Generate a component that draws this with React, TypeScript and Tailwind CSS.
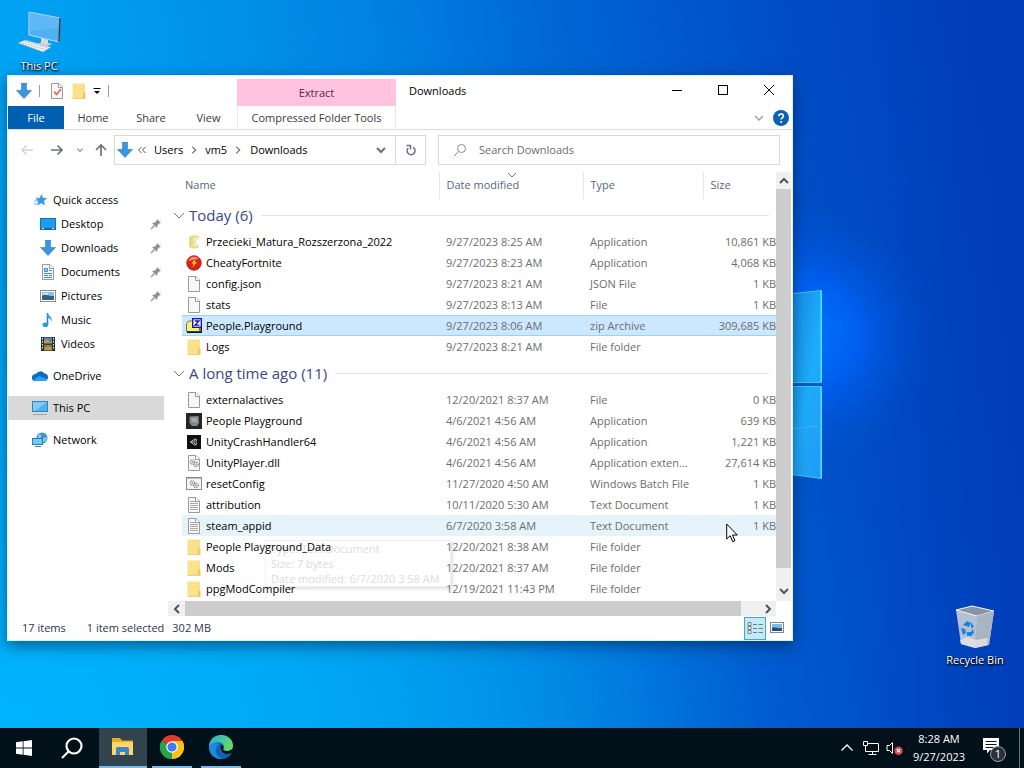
import type { ReactNode } from "react"

type IconName =
  | "star" | "desktop" | "down" | "docs" | "pictures" | "music" | "videos" | "cloud" | "pc" | "network"
  | "matura" | "cheaty" | "file" | "zip" | "folder" | "playground" | "unity" | "dll" | "batch" | "text"

interface FileRow {
  name: string
  date: string
  type: string
  size?: string
  icon: IconName
  state?: "selected" | "hover"
}

interface NavItem {
  label: string
  icon: IconName
  child?: boolean
  pinned?: boolean
  active?: boolean
  gap?: boolean
}

const groups: { title: string; files: FileRow[] }[] = [
  {
    title: "Today (6)",
    files: [
      { name: "Przecieki_Matura_Rozszerzona_2022", date: "9/27/2023 8:25 AM", type: "Application", size: "10,861 KB", icon: "matura" },
      { name: "CheatyFortnite", date: "9/27/2023 8:23 AM", type: "Application", size: "4,068 KB", icon: "cheaty" },
      { name: "config.json", date: "9/27/2023 8:21 AM", type: "JSON File", size: "1 KB", icon: "file" },
      { name: "stats", date: "9/27/2023 8:13 AM", type: "File", size: "1 KB", icon: "file" },
      { name: "People.Playground", date: "9/27/2023 8:06 AM", type: "zip Archive", size: "309,685 KB", icon: "zip", state: "selected" },
      { name: "Logs", date: "9/27/2023 8:21 AM", type: "File folder", icon: "folder" },
    ],
  },
  {
    title: "A long time ago (11)",
    files: [
      { name: "externalactives", date: "12/20/2021 8:37 AM", type: "File", size: "0 KB", icon: "file" },
      { name: "People Playground", date: "4/6/2021 4:56 AM", type: "Application", size: "639 KB", icon: "playground" },
      { name: "UnityCrashHandler64", date: "4/6/2021 4:56 AM", type: "Application", size: "1,221 KB", icon: "unity" },
      { name: "UnityPlayer.dll", date: "4/6/2021 4:56 AM", type: "Application exten...", size: "27,614 KB", icon: "dll" },
      { name: "resetConfig", date: "11/27/2020 4:50 AM", type: "Windows Batch File", size: "1 KB", icon: "batch" },
      { name: "attribution", date: "10/11/2020 5:30 AM", type: "Text Document", size: "1 KB", icon: "text" },
      { name: "steam_appid", date: "6/7/2020 3:58 AM", type: "Text Document", size: "1 KB", icon: "text", state: "hover" },
      { name: "People Playground_Data", date: "12/20/2021 8:38 AM", type: "File folder", icon: "folder" },
      { name: "Mods", date: "12/20/2021 8:37 AM", type: "File folder", icon: "folder" },
      { name: "ppgModCompiler", date: "12/19/2021 11:43 PM", type: "File folder", icon: "folder" },
    ],
  },
]

const navItems: NavItem[] = [
  { label: "Quick access", icon: "star" },
  { label: "Desktop", icon: "desktop", child: true, pinned: true },
  { label: "Downloads", icon: "down", child: true, pinned: true },
  { label: "Documents", icon: "docs", child: true, pinned: true },
  { label: "Pictures", icon: "pictures", child: true, pinned: true },
  { label: "Music", icon: "music", child: true },
  { label: "Videos", icon: "videos", child: true },
  { label: "OneDrive", icon: "cloud", gap: true },
  { label: "This PC", icon: "pc", active: true, gap: true },
  { label: "Network", icon: "network", gap: true },
]

const page = (
  <>
    <path d="M2.500 .5h7.500l3.500 3.500v11.500h-11z" fill="#f8f8f8" stroke="#9a9a9a" />
    <path d="M9.500 .5v4h4" fill="#fff" stroke="#9a9a9a" />
  </>
)

const gears = (
  <g fill="none" stroke="#8a8f94">
    <circle cx="6.500" cy="7" r="2.200" strokeDasharray="1.300 .6" strokeWidth="1.200" />
    <circle cx="10" cy="9.500" r="2.200" strokeDasharray="1.300 .6" strokeWidth="1.200" />
    <circle cx="6.500" cy="7" r=".5" />
    <circle cx="10" cy="9.500" r=".5" />
  </g>
)

const iconShapes: Record<IconName, ReactNode> = {
  star: (
    <>
      <path d="M9.500 2l1.500 3.700 4 .3-3 3 1.200 4.500-4-2.200L5.500 13.500l.7-4L3.500 6.500l4.200-.6z" fill="#3a9be0" />
      <path d="M2 9h4M2 12h4M4 6h2" stroke="#5cb0ea" />
    </>
  ),
  desktop: (
    <>
      <rect x=".5" y="2.500" width="15" height="11" fill="#1e9df0" stroke="#1470b8" />
      <path d="M1 12.500h14" stroke="#0f5f9f" />
      <path d="M2 12.500h2M12 12.500h2" stroke="#cfeaff" />
    </>
  ),
  down: <path d="M5.500 0h5v7.500H15.500l-7.500 8-7.500-8h5z" fill="#3d94df" stroke="#2b7cc4" strokeWidth=".6" />,
  docs: (
    <>
      {page}
      <path d="M4.500 4.500h3v3h-3zM9 6.500h3M4 9.500h8M4 11.500h4M9 11.500h3M4 13.500h8" stroke="#3b8fc9" fill="#9fd0ee" />
    </>
  ),
  pictures: (
    <>
      <rect x=".5" y="2.500" width="15" height="11" fill="#fff" stroke="#8b8b8b" />
      <path d="M2 4h12v8H2z" fill="#8ac4ee" />
      <path d="M2 8c3-3 6 0 12 0v4H2z" fill="#35617c" />
      <path d="M3 6h5" stroke="#fff" />
    </>
  ),
  music: (
    <>
      <path d="M7.500 1v11" stroke="#1d87c9" strokeWidth="1.600" />
      <path d="M7 .5c1 3.500 6 4 4.500 9.500C11 7 9.500 6 7 5.500z" fill="#2d9bdd" />
      <ellipse cx="5.400" cy="12.700" rx="2.900" ry="2.300" fill="#2d9bdd" />
    </>
  ),
  videos: (
    <>
      <rect x="1" y="1" width="14" height="14" fill="#26313a" />
      <path d="M4 1.500h8v6H4z" fill="#4f86b5" />
      <path d="M4 8.500h8v6H4z" fill="#8c7460" />
      <path d="M4 5l3-2 3 3 2-1v3H4zM5 12l3-2 4 2v2H4z" fill="#b99a4a" />
      <path d="M4 8h8" stroke="#26313a" />
      <path d="M2.500 2v12M13.500 2v12" stroke="#eee" strokeDasharray="1.500 1.500" />
    </>
  ),
  cloud: (
    <>
      <path d="M0 10a3.500 3.500 0 0 1 4-4 5 5 0 0 1 8.500-.5A3.800 3.800 0 0 1 13 13H4a3 3 0 0 1-4-3z" fill="#0f6cc4" />
      <path d="M1 12l6-4 8 3c-.4 1.300-1.200 2-2.500 2H4c-.8 0-2-.4-3-1z" fill="#2ba2ec" />
    </>
  ),
  pc: (
    <>
      <rect x=".5" y="1.500" width="15" height="10" fill="#4db4f2" stroke="#3583b5" />
      <path d="M1 2h14L3 11H1z" fill="#7ccbf8" />
      <path d="M1 14.500h14" stroke="#9aa3a9" />
    </>
  ),
  network: (
    <>
      <circle cx="10" cy="6" r="5.500" fill="#3f92c8" />
      <path d="M6 3c2-2 4 0 3 2S7 8 6 7zM11 6l4-1-1 4-3 1z" fill="#86cbe8" />
      <rect x=".5" y="6.500" width="10" height="6" fill="#6fcbf5" stroke="#2d7eae" />
      <path d="M3 14.500h6" stroke="#3b84ad" />
    </>
  ),
  matura: (
    <>
      <path d="M3 3c2-2 6-2 10-1v4h-3v4h3v3c-3 2-7 2-10 0z" fill="#e4e28c" />
      <path d="M8 4h5v2H9v4h4v2H8z" fill="#f3f0b8" />
      <path d="M4.500 4v8" stroke="#d2d070" />
    </>
  ),
  cheaty: (
    <>
      <circle cx="8" cy="8" r="7.300" fill="#d92313" stroke="#a3201a" strokeWidth=".8" />
      <path d="M2.500 6a6 6 0 0 1 10.500-2C9 3.500 6 5 2.500 6z" fill="#f7907c" />
      <path d="M9.500 3.500L5.500 8.500h2L6.500 12.500l4.500-5.500H9z" fill="#ffc51f" />
    </>
  ),
  file: page,
  zip: (
    <>
      <path d="M.5 5.500l2-2.500h4l1 2h6v8.500H.5z" fill="#f6ef7c" stroke="#77743a" />
      <path d="M1 14.200h14.200V6" stroke="#111" fill="none" strokeWidth="1.500" />
      <rect x="6.700" y=".7" width="8.600" height="8.600" fill="#fff" stroke="#1616b5" strokeWidth="1.400" />
      <path d="M8.800 3h4.200l-4 4.200h4.400" stroke="#1616b5" strokeWidth="1.300" fill="none" />
    </>
  ),
  folder: (
    <>
      <path d="M1.500 .5h12v15h-12z" fill="#fbe189" />
      <path d="M12 9.500h2.500v6H12z" fill="#ecc95c" />
      <path d="M1.500 15.500h13" stroke="#ecd070" />
      <path d="M13 .5v9" stroke="#f4d471" />
    </>
  ),
  playground: (
    <>
      <path d="M0 0h16v16H0z" fill="#232426" />
      <path d="M3.500 3.500l9-.5.5 7-2 3H6L3.500 10z" fill="#84888b" />
      <path d="M5 5h6v4H6z" fill="#a3a7aa" />
    </>
  ),
  unity: (
    <>
      <path d="M1 1h14v14H1z" fill="#101010" />
      <path d="M4.500 8l4-3 2 .5-.5 2.500.5 2.500-2 .5zM4.500 8h3M9.500 5.500L7.500 8l2 2.500" fill="none" stroke="#e5e5e5" strokeWidth=".8" />
    </>
  ),
  dll: (
    <>
      {page}
      {gears}
    </>
  ),
  batch: (
    <>
      <rect x=".5" y="1.500" width="15" height="12" fill="#f7f7f7" stroke="#858a8e" />
      <path d="M1 2.500h14" stroke="#b9bdc0" />
      {gears}
    </>
  ),
  text: (
    <>
      {page}
      <path d="M4 4.500h5M4 6.500h8M4 8.500h8M4 10.500h8M4 12.500h8" stroke="#a9a9a9" />
    </>
  ),
}

const Icon = ({ name }: { name: IconName }) => (
  <svg viewBox="0 0 16 16" className="w-4 h-4 shrink-0" aria-hidden="true">
    {iconShapes[name]}
  </svg>
)

const Chevron = ({ d, className, width = 1.5 }: { d: string; className: string; width?: number }) => (
  <svg viewBox="0 0 12 12" className={className} fill="none" stroke="currentColor" strokeWidth={width} aria-hidden="true">
    <path d={d} />
  </svg>
)

const UP = "M2 8l4-4 4 4"
const DOWN = "M2 4l4 4 4-4"
const LEFT = "M8 2L4 6l4 4"
const RIGHT = "M4 2l4 4-4 4"

const TitleBar = () => (
  <div className="flex h-[30px]">
    <div className="flex w-[229px] items-center pl-2">
      <button aria-label="Downloads folder"><Icon name="down" /></button>
      <span className="ml-[7px] h-3 w-px bg-gray-400" />
      <button aria-label="Properties" className="ml-[9px]">
        <svg viewBox="0 0 16 16" className="w-4 h-4">
          {page}
          <path d="M5 8.500l2.500 3L12 6" stroke="#e0604a" strokeWidth="1.500" fill="none" />
        </svg>
      </button>
      <button aria-label="New folder" className="ml-[6px]"><Icon name="folder" /></button>
      <button aria-label="Customize toolbar" className="ml-[6px]">
        <svg viewBox="0 0 8 8" className="w-2 h-2"><path d="M.5 1.500h7" stroke="#000" /><path d="M1 4h6L4 7z" /></svg>
      </button>
      <span className="ml-[7px] h-3 w-px bg-gray-400" />
    </div>
    <div className="mt-[3px] flex w-[159px] items-center justify-center bg-[#ffc3df] text-[#5c2745]">Extract</div>
    <h1 className="flex-1 pl-[13px] leading-[30px] text-black">Downloads</h1>
    <button aria-label="Minimize" className="flex w-[46px] items-center justify-center pb-[2px]">
      <span className="h-px w-[10px] bg-black" />
    </button>
    <button aria-label="Maximize" className="flex w-[46px] items-center justify-center pb-[2px]">
      <span className="h-[10px] w-[10px] border border-black" />
    </button>
    <button aria-label="Close" className="flex w-[46px] items-center justify-center pb-[2px]">
      <svg viewBox="0 0 10 10" className="w-[10px] h-[10px]"><path d="M0 0l10 10M10 0L0 10" stroke="#000" /></svg>
    </button>
  </div>
)

const RibbonTabs = () => (
  <div className="flex h-6 items-stretch border-b border-[#dadbdc] text-[#3b3b3b]">
    <button className="w-14 bg-[#005fb0] text-white">File</button>
    <button className="w-[58px]">Home</button>
    <button className="w-[58px]">Share</button>
    <button className="w-[57px]">View</button>
    <button className="w-[159px] border-x border-[#ece6e9]">Compressed Folder Tools</button>
    <div className="flex flex-1 items-center justify-end gap-2 pr-[3px]">
      <button aria-label="Expand ribbon" className="text-gray-400"><Chevron d={DOWN} className="w-3 h-3" /></button>
      <button aria-label="Help">
        <svg viewBox="0 0 16 16" className="w-4 h-4">
          <circle cx="8" cy="8" r="8" fill="#0a63b0" />
          <path d="M5.700 6.200c0-3 4.700-3 4.700-.2 0 1.600-2.200 1.700-2.200 3.600" fill="none" stroke="#fff" strokeWidth="1.600" />
          <circle cx="8.200" cy="12" r="1.100" fill="#fff" />
        </svg>
      </button>
    </div>
  </div>
)

const AddressBar = () => (
  <div className="flex h-[42px] items-center px-3 pb-[2px]">
    <button aria-label="Back" className="text-gray-300">
      <svg viewBox="0 0 14 14" className="w-[14px] h-[14px]" fill="none" stroke="currentColor" strokeWidth="1.500"><path d="M13 7H2M6.500 2.500L2 7l4.500 4.500" /></svg>
    </button>
    <button aria-label="Forward" className="ml-4 text-gray-500">
      <svg viewBox="0 0 14 14" className="w-[14px] h-[14px]" fill="none" stroke="currentColor" strokeWidth="1.700"><path d="M1 7h11M7.500 2.500L12 7l-4.500 4.500" /></svg>
    </button>
    <button aria-label="Recent locations" className="ml-3 text-gray-400"><Chevron d={DOWN} className="w-2 h-2" width={2} /></button>
    <button aria-label="Up" className="ml-[10px] text-gray-500">
      <svg viewBox="0 0 14 14" className="w-[14px] h-[14px]" fill="none" stroke="currentColor" strokeWidth="1.700"><path d="M7 13V2M2 7l5-5 5 5" /></svg>
    </button>
    <div className="ml-[6px] flex h-[30px] w-[312px] items-center border border-[#d9d9d9] text-black">
      <span className="ml-[2px]"><Icon name="down" /></span>
      <svg viewBox="0 0 8 8" className="ml-[5px] w-2 h-2" fill="none" stroke="#555"><path d="M3.500 1l-3 3 3 3M7.500 1l-3 3 3 3" /></svg>
      <a href="#users" className="ml-2">Users</a>
      <Chevron d={RIGHT} className="ml-[6px] w-[10px] h-[10px] text-gray-500" />
      <a href="#vm5" className="ml-[6px]">vm5</a>
      <Chevron d={RIGHT} className="ml-[6px] w-[10px] h-[10px] text-gray-500" />
      <a href="#downloads" className="ml-[7px]">Downloads</a>
      <button aria-label="Previous locations" className="ml-auto mr-2 text-gray-500"><Chevron d={DOWN} className="w-3 h-3" width={2} /></button>
      <button aria-label="Refresh" className="flex h-full w-[30px] items-center justify-center border-l border-[#d9d9d9] text-gray-500">
        <svg viewBox="0 0 12 12" className="w-3 h-3" fill="none" stroke="currentColor" strokeWidth="1.500">
          <path d="M8.200 3.300a4 4 0 1 1-5 .6" />
          <path d="M1.500 1.500h4v4" />
        </svg>
      </button>
    </div>
    <label className="ml-3 flex h-[30px] flex-1 items-center border border-[#d9d9d9] pl-[14px]">
      <svg viewBox="0 0 14 14" className="w-[14px] h-[14px]" fill="none" stroke="#8a8a8a"><circle cx="8.500" cy="5.500" r="4" /><path d="M5.500 8.500L1 13" /></svg>
      <input type="search" aria-label="Search Downloads" placeholder="Search Downloads" className="ml-3 min-w-0 flex-1 outline-none placeholder:text-[#6d6d6d]" />
    </label>
  </div>
)

const NavPane = () => (
  <nav className="w-40 shrink-0 pt-4 pr-1 text-black">
    {navItems.map((item) => (
      <a
        key={item.label}
        href="#nav"
        className={`flex h-6 items-center gap-[5px] ${item.child ? "pl-8" : "pl-6"} ${item.gap ? "mt-2" : ""} ${item.active ? "bg-[#d9d9d9]" : ""}`}
      >
        <Icon name={item.icon} />
        <span>{item.label}</span>
        {item.pinned && (
          <svg viewBox="0 0 12 12" className="ml-auto mr-[2px] w-3 h-3">
            <path d="M7 1l4 4-1.500.3-2 2L7 10 2 5l2.700-.5 2-2z" fill="#8b939a" />
            <path d="M4.500 7.500L1 11" stroke="#8b939a" strokeWidth="1.200" />
          </svg>
        )}
      </a>
    ))}
  </nav>
)

const rowColors = {
  selected: "bg-[#cce8ff] shadow-[inset_0_1px_0_#99d1ff,inset_0_-1px_0_#99d1ff]",
  hover: "bg-[#e5f3fb]",
}

const FileTable = () => (
  <table className="relative w-full table-fixed border-collapse text-left text-[#6d6d6d]">
    <colgroup>
      <col className="w-[10px]" />
      <col />
      <col className="w-36" />
      <col className="w-[120px]" />
      <col className="w-[73px]" />
    </colgroup>
    <thead>
      <tr className="h-[27px] text-[#56677a]">
        <td />
        <th scope="col" className="pt-0 pb-[2px] pl-[3px] font-normal">Name</th>
        <th scope="col" className="relative border-l border-[#e5e5e5] pt-0 pb-[2px] pl-[7px] font-normal">
          <Chevron d={DOWN} className="absolute left-[66px] top-[-3px] w-3 h-3 text-gray-500" width={1} />
          Date modified
        </th>
        <th scope="col" className="border-l border-[#e5e5e5] pt-0 pb-[2px] pl-[7px] font-normal">Type</th>
        <th scope="col" className="border-l border-[#e5e5e5] pt-0 pb-[2px] pl-[7px] font-normal">Size</th>
      </tr>
    </thead>
    {groups.map((group) => (
      <tbody key={group.title}>
        <tr className="h-8">
          <th colSpan={5} scope="colgroup" className="p-0 font-normal">
            <div className="flex items-center pr-[7px] text-[15px] text-[#3c4688]">
              <Chevron d="M1 4l5 5 5-5" className="ml-[1px] mr-1 w-3 h-3 text-gray-500" width={1} />
              {group.title}
              <span className="ml-2 h-px flex-1 bg-[#e2e2e2]" />
            </div>
          </th>
        </tr>
        {group.files.map((file) => {
          const color = file.state ? rowColors[file.state] : ""
          return (
            <tr key={file.name} className="h-[21px]">
              <td className="p-0" />
              <td className={`p-0 ${color}`}>
                <div className="flex items-center gap-1 pl-1 text-black">
                  <Icon name={file.icon} />
                  {file.name}
                </div>
              </td>
              <td className={`py-0 pl-[7px] ${color}`}>{file.date}</td>
              <td className={`py-0 pl-[7px] whitespace-nowrap ${color}`}>{file.type}</td>
              <td className={`p-0 text-right whitespace-nowrap ${color}`}>{file.size}</td>
            </tr>
          )
        })}
      </tbody>
    ))}
  </table>
)

// Tooltip caught while fading out, file names show over it
const FileTooltip = () => (
  <div className="absolute left-[97px] bottom-[14px] w-[186px] border border-gray-200/60 pl-[5px] text-[#dcdcdc] leading-[15px] shadow-[2px_2px_3px_rgba(0,0,0,0.12)]">
    <p className="whitespace-nowrap">Type: Text Document</p>
    <p>Size: 7 bytes</p>
    <p className="whitespace-nowrap">Date modified: 6/7/2020 3:58 AM</p>
  </div>
)

const ExplorerWindow = () => (
  <main className="absolute left-[7px] right-[231px] top-[75px] border border-[#d9f1fb] bg-white shadow-[0_5px_14px_rgba(0,30,60,0.55)]">
    <TitleBar />
    <RibbonTabs />
    <AddressBar />
    <div className="flex">
      <NavPane />
      <section className="min-w-0 flex-1">
        <div className="flex">
          <div className="relative min-w-0 flex-1 pb-[2px] pl-1">
            <FileTooltip />
            <FileTable />
          </div>
          <div className="mr-px flex w-[15px] flex-col items-center bg-[#f0f0f0] text-gray-600">
            <button aria-label="Scroll up" className="flex h-[17px] items-center"><Chevron d={UP} className="w-3 h-3" width={2} /></button>
            <div className="w-full flex-1 bg-[#cdcdcd]" />
            <button aria-label="Scroll down" className="mt-[14px] mb-[2px] flex h-[17px] items-center"><Chevron d={DOWN} className="w-3 h-3" width={2} /></button>
          </div>
        </div>
        <div className="mr-4 flex h-[15px] items-center bg-[#f0f0f0] text-gray-600">
          <button aria-label="Scroll left" className="flex w-[17px] justify-center"><Chevron d={LEFT} className="w-3 h-3" width={2} /></button>
          <div className="h-full flex-1 bg-[#cdcdcd]" />
          <button aria-label="Scroll right" className="ml-[18px] flex w-[17px] justify-center"><Chevron d={RIGHT} className="w-3 h-3" width={2} /></button>
        </div>
      </section>
    </div>
    <footer className="flex h-6 items-center pl-[14px] text-[#2b3553]">
      <span>17 items</span>
      <span className="ml-[21px]">1 item selected</span>
      <span className="ml-2">302 MB</span>
      <button aria-label="Details view" className="ml-auto flex h-[23px] w-[22px] items-center justify-center border border-[#4aa3c9] bg-[#c4eaf7]">
        <svg viewBox="0 0 16 14" className="w-4 h-[14px]" fill="none" stroke="#6d7f88"><path d="M1 1.500h3v3H1zM1 5.500h3v3H1zM1 9.500h3v3H1z" fill="#fff" /><path d="M6 3.500h4M11.500 3.500H16M6 7.500h4M11.500 7.500H16M6 11.500h4M11.500 11.500H16" /></svg>
      </button>
      <button aria-label="Large icons view" className="ml-1 mr-2">
        <svg viewBox="0 0 14 12" className="w-[14px] h-3"><rect x=".5" y=".5" width="13" height="10" fill="#fff" stroke="#7e8a92" /><path d="M2 2h10v7H2z" fill="#7fbbe8" /><path d="M2 6c3-2 5 1 10 0v3H2z" fill="#274c7c" /></svg>
      </button>
    </footer>
  </main>
)

const Wallpaper = () => (
  <svg viewBox="0 0 1024 728" preserveAspectRatio="none" className="absolute inset-0 h-full w-full" aria-hidden="true">
    <defs>
      <linearGradient id="sky" gradientUnits="userSpaceOnUse" x1="0" y1="300" x2="980" y2="120">
        <stop offset="0" stopColor="#00a6f6" />
        <stop offset=".2" stopColor="#0098ee" />
        <stop offset=".42" stopColor="#0082e2" />
        <stop offset=".6" stopColor="#0066d4" />
        <stop offset=".8" stopColor="#004fc8" />
        <stop offset="1" stopColor="#0040ba" />
      </linearGradient>
      <radialGradient id="corner" cx="0" cy="1" r=".75">
        <stop offset="0" stopColor="#00b4ff" />
        <stop offset=".4" stopColor="#00acf6" stopOpacity=".8" />
        <stop offset="1" stopColor="#00a0f0" stopOpacity="0" />
      </radialGradient>
      <linearGradient id="edge" x1="0" y1="0" x2="1" y2="0">
        <stop offset=".85" stopColor="#003cb6" stopOpacity="0" />
        <stop offset="1" stopColor="#003cb6" stopOpacity=".7" />
      </linearGradient>
      <radialGradient id="glow" gradientUnits="userSpaceOnUse" cx="805" cy="335" r="130">
        <stop offset="0" stopColor="#0076ff" />
        <stop offset=".4" stopColor="#0064fa" stopOpacity=".8" />
        <stop offset="1" stopColor="#0050d0" stopOpacity="0" />
      </radialGradient>
      <linearGradient id="pane" x1="0" y1="0" x2="1" y2="1">
        <stop offset="0" stopColor="#1583e0" />
        <stop offset=".6" stopColor="#1eacfb" />
        <stop offset="1" stopColor="#2299f5" />
      </linearGradient>
    </defs>
    <path d="M0 0h1024v728H0z" fill="url(#sky)" />
    <path d="M0 0h1024v728H0z" fill="url(#corner)" />
    <path d="M0 0h1024v728H0z" fill="url(#edge)" />
    <path d="M600 150h424v400H600z" fill="url(#glow)" />
    <path d="M780 382h42v5h-42z" fill="#0a5cc0" />
    <path d="M780 295l41.500-4.500v92H780zM780 386.500h41.500v92L780 473z" fill="url(#pane)" stroke="#3cc8fa" />
    <path d="M821.200 291v91M821.200 387v91" stroke="#50e4fb" strokeWidth="1.500" />
    <path d="M780 430l38-4" stroke="#3fb8fb" />
  </svg>
)

const Taskbar = () => (
  <footer className="relative flex h-10 items-stretch bg-[#02101a] text-white">
    <button aria-label="Start" className="flex w-12 items-center justify-center">
      <svg viewBox="0 0 16 16" className="w-4 h-4" fill="#fff"><path d="M0 2.300L6.700 1.300v6.300H0zM7.500 1.200L16 0v7.600H7.500zM0 8.400h6.700v6.400L0 13.800zM7.500 8.400H16V16l-8.500-1.200z" /></svg>
    </button>
    <button aria-label="Search" className="flex w-12 items-center justify-center">
      <svg viewBox="0 0 22 22" className="w-[22px] h-[22px]" fill="none" stroke="#fff" strokeWidth="2.200"><circle cx="13" cy="9" r="7.500" /><path d="M7.500 14.500L1 21" /></svg>
    </button>
    <button aria-label="File Explorer" className="ml-[3px] flex w-12 items-center justify-center border-b-2 border-[#76b9ed] bg-[#33434d]">
      <svg viewBox="0 0 22 20" className="w-[22px] h-5">
        <path d="M0 1h8l2 2.500h11V18H0z" fill="#e9a72c" />
        <path d="M0 5h21v13H0z" fill="#ffd767" />
        <path d="M4 18v-6.500q0-1.500 1.500-1.500h10q1.500 0 1.500 1.500V18h-4v-3H8v3z" fill="#3a86c8" />
      </svg>
    </button>
    <button aria-label="Google Chrome" className="ml-[5px] flex w-10 items-center justify-center border-b-2 border-[#76b9ed]">
      <svg viewBox="0 0 24 24" className="w-6 h-6">
        <path d="M12 12L1.600 6A12 12 0 0 1 22.400 6z" fill="#e33b2e" />
        <path d="M12 12L22.400 6A12 12 0 0 1 12 24z" fill="#fbc116" />
        <path d="M12 12v12A12 12 0 0 1 1.600 6z" fill="#2ba24c" />
        <path d="M12 6h10.400a12 12 0 0 1-5.200 16.800L12 24l5.200-9z" fill="#fbc116" />
        <path d="M1.600 6l5.200 9 5.200 3-1.500 6A12 12 0 0 1 1.600 6z" fill="#2ba24c" />
        <circle cx="12" cy="12" r="5.800" fill="#fff" />
        <circle cx="12" cy="12" r="4.600" fill="#3d7df0" />
      </svg>
    </button>
    <button aria-label="Microsoft Edge" className="ml-[9px] flex w-10 items-center justify-center border-b-2 border-[#76b9ed]">
      <svg viewBox="0 0 24 24" className="w-6 h-6">
        <defs>
          <linearGradient id="edgeTop" x1="0" y1="0" x2="1" y2=".4">
            <stop offset="0" stopColor="#2aa9e8" />
            <stop offset="1" stopColor="#5fdc63" />
          </linearGradient>
        </defs>
        <circle cx="12" cy="12" r="12" fill="#1478cf" />
        <path d="M0 12C0 5 5 0 12 0s12 5 12 10.500c0 4-3 5.500-6 5.500-3.500 0-4.500-1.500-3.500-2.500 2-3-1-6.500-5-6.500C5 7 1 9 0 12z" fill="url(#edgeTop)" />
        <path d="M9 9c-4 3-4 12 5 15-8 1-14-5-14-12 2-4 6-5 9-3z" fill="#1b8bdc" />
        <path d="M11.500 9.500c-2 3-1.500 10 7 9.500 1.500 0 3-.6 4-1.200A12 12 0 0 1 14 24C5 22 6 11 11.500 9.500z" fill="#1560ae" />
        <path d="M14.500 13.500c-1 1 0 2.500 3.500 2.500 2.500 0 5-1 5.800-3 .3 2-.3 3.500-1.300 4.800-5 2.700-12 .7-11-8.300 2 0 3.500 2 3 4z" fill="#02101a" />
      </svg>
    </button>
    <div className="ml-auto flex items-center">
      <button aria-label="Show hidden icons"><Chevron d="M.5 8.500L6 3l5.500 5.500" className="w-3 h-3" width={1.3} /></button>
      <button aria-label="Network" className="ml-[10px]">
        <svg viewBox="0 0 16 14" className="w-4 h-[14px]" fill="none" stroke="#fff"><path d="M4.500 2.500h11v8H2.500V5M5.500 13.500h8M9.500 10.500v3M.5 .5h4v4h-4z" /></svg>
      </button>
      <button aria-label="Volume muted" className="ml-[7px]">
        <svg viewBox="0 0 17 14" className="w-[17px] h-[14px]"><path d="M1 4.500h2.500L6.500 1.500v11L3.500 9.500H1z" fill="none" stroke="#fff" /><circle cx="12.500" cy="9.700" r="4.300" fill="#d9414a" /><path d="M10.800 8l3.400 3.400M14.200 8l-3.400 3.400" stroke="#fff" strokeWidth="1.200" /></svg>
      </button>
      <time className="ml-[9px] w-[54px] text-center leading-[18px]">8:28 AM<br />9/27/2023</time>
      <button aria-label="1 notification" className="relative ml-4 mr-[13px] flex">
        <svg viewBox="0 0 24 24" className="w-6 h-6">
          <path d="M1 2h16v12H8l-3 3.500V14H1z" fill="#fff" />
          <path d="M3.500 5.500h11M3.500 8.500h11M3.500 11.500h8" stroke="#0a1520" />
        </svg>
        <span className="absolute left-2 top-[10px] flex h-4 w-4 items-center justify-center rounded-full border border-gray-400 bg-[#2a3138]">1</span>
      </button>
      <span className="mr-1 h-full w-px bg-gray-500" />
    </div>
  </footer>
)

const iconLabel = "text-white [text-shadow:0_1px_2px_#000,1px_1px_2px_#000]"

const App = () => (
  <div className="flex min-h-screen flex-col overflow-hidden font-['Open_Sans','Noto_Sans',sans-serif] text-[11px] leading-4">
    <div className="relative min-h-[660px] flex-1">
      <Wallpaper />
      <a href="#pc" className="absolute left-[9px] top-[10px] flex w-[60px] flex-col items-center">
        <svg viewBox="0 0 44 44" className="w-11 h-11">
          <path d="M12 2l31 6-1 24-30-7z" fill="#4fb0f4" stroke="#c8dbe6" />
          <path d="M12 2l31 6v10L12 21z" fill="#6cbff6" opacity=".5" />
          <path d="M43 8l-1 24" stroke="#31414c" strokeWidth="1.500" />
          <path d="M24 28l7 2v3l5 1-7 2-9-2 4-1.500z" fill="#d5dde2" />
          <path d="M1 33l7-3 26 7-8 5z" fill="#eef1f3" stroke="#93a3ad" strokeWidth=".6" />
          <path d="M5 33l23 6.500M8 31.500l22 6" stroke="#b4c0c7" strokeDasharray="2 1" />
        </svg>
        <span className={`mt-1 ${iconLabel}`}>This PC</span>
      </a>
      <a href="#bin" className="absolute bottom-[60px] right-[14px] flex w-[70px] flex-col items-center">
        <svg viewBox="0 0 40 44" className="w-10 h-11">
          <path d="M1 5l16-4 22 5-5 34-14 3-14-4z" fill="#c3ccd6" opacity=".92" />
          <path d="M1 5l16-4 22 5-17 5z" fill="#8794a5" stroke="#f1f4f7" />
          <path d="M22 11l-2 32 14-3 5-34z" fill="#aab5c4" />
          <path d="M5 35l8-3 8 3 12-2-1 7-12 3-14-4z" fill="#e6e4e2" opacity=".8" />
          <path d="M8 20l4-4 4 2-2 4zM6 23l4 1 1 4-3 2zM12 31v-4h4l2-3 1 4-3 3zM16 17l3 5-3 1z" fill="#1684da" />
        </svg>
        <span className={`mt-[3px] whitespace-nowrap ${iconLabel}`}>Recycle Bin</span>
      </a>
      <ExplorerWindow />
      <svg viewBox="0 0 12 20" className="absolute left-[726px] top-[523px] h-5 w-3" aria-hidden="true">
        <path d="M.7 1v15l3.500-3.300 2.500 6 2.300-1-2.500-5.700h4.800z" fill="#fff" stroke="#000" />
      </svg>
    </div>
    <Taskbar />
  </div>
)

export default App
